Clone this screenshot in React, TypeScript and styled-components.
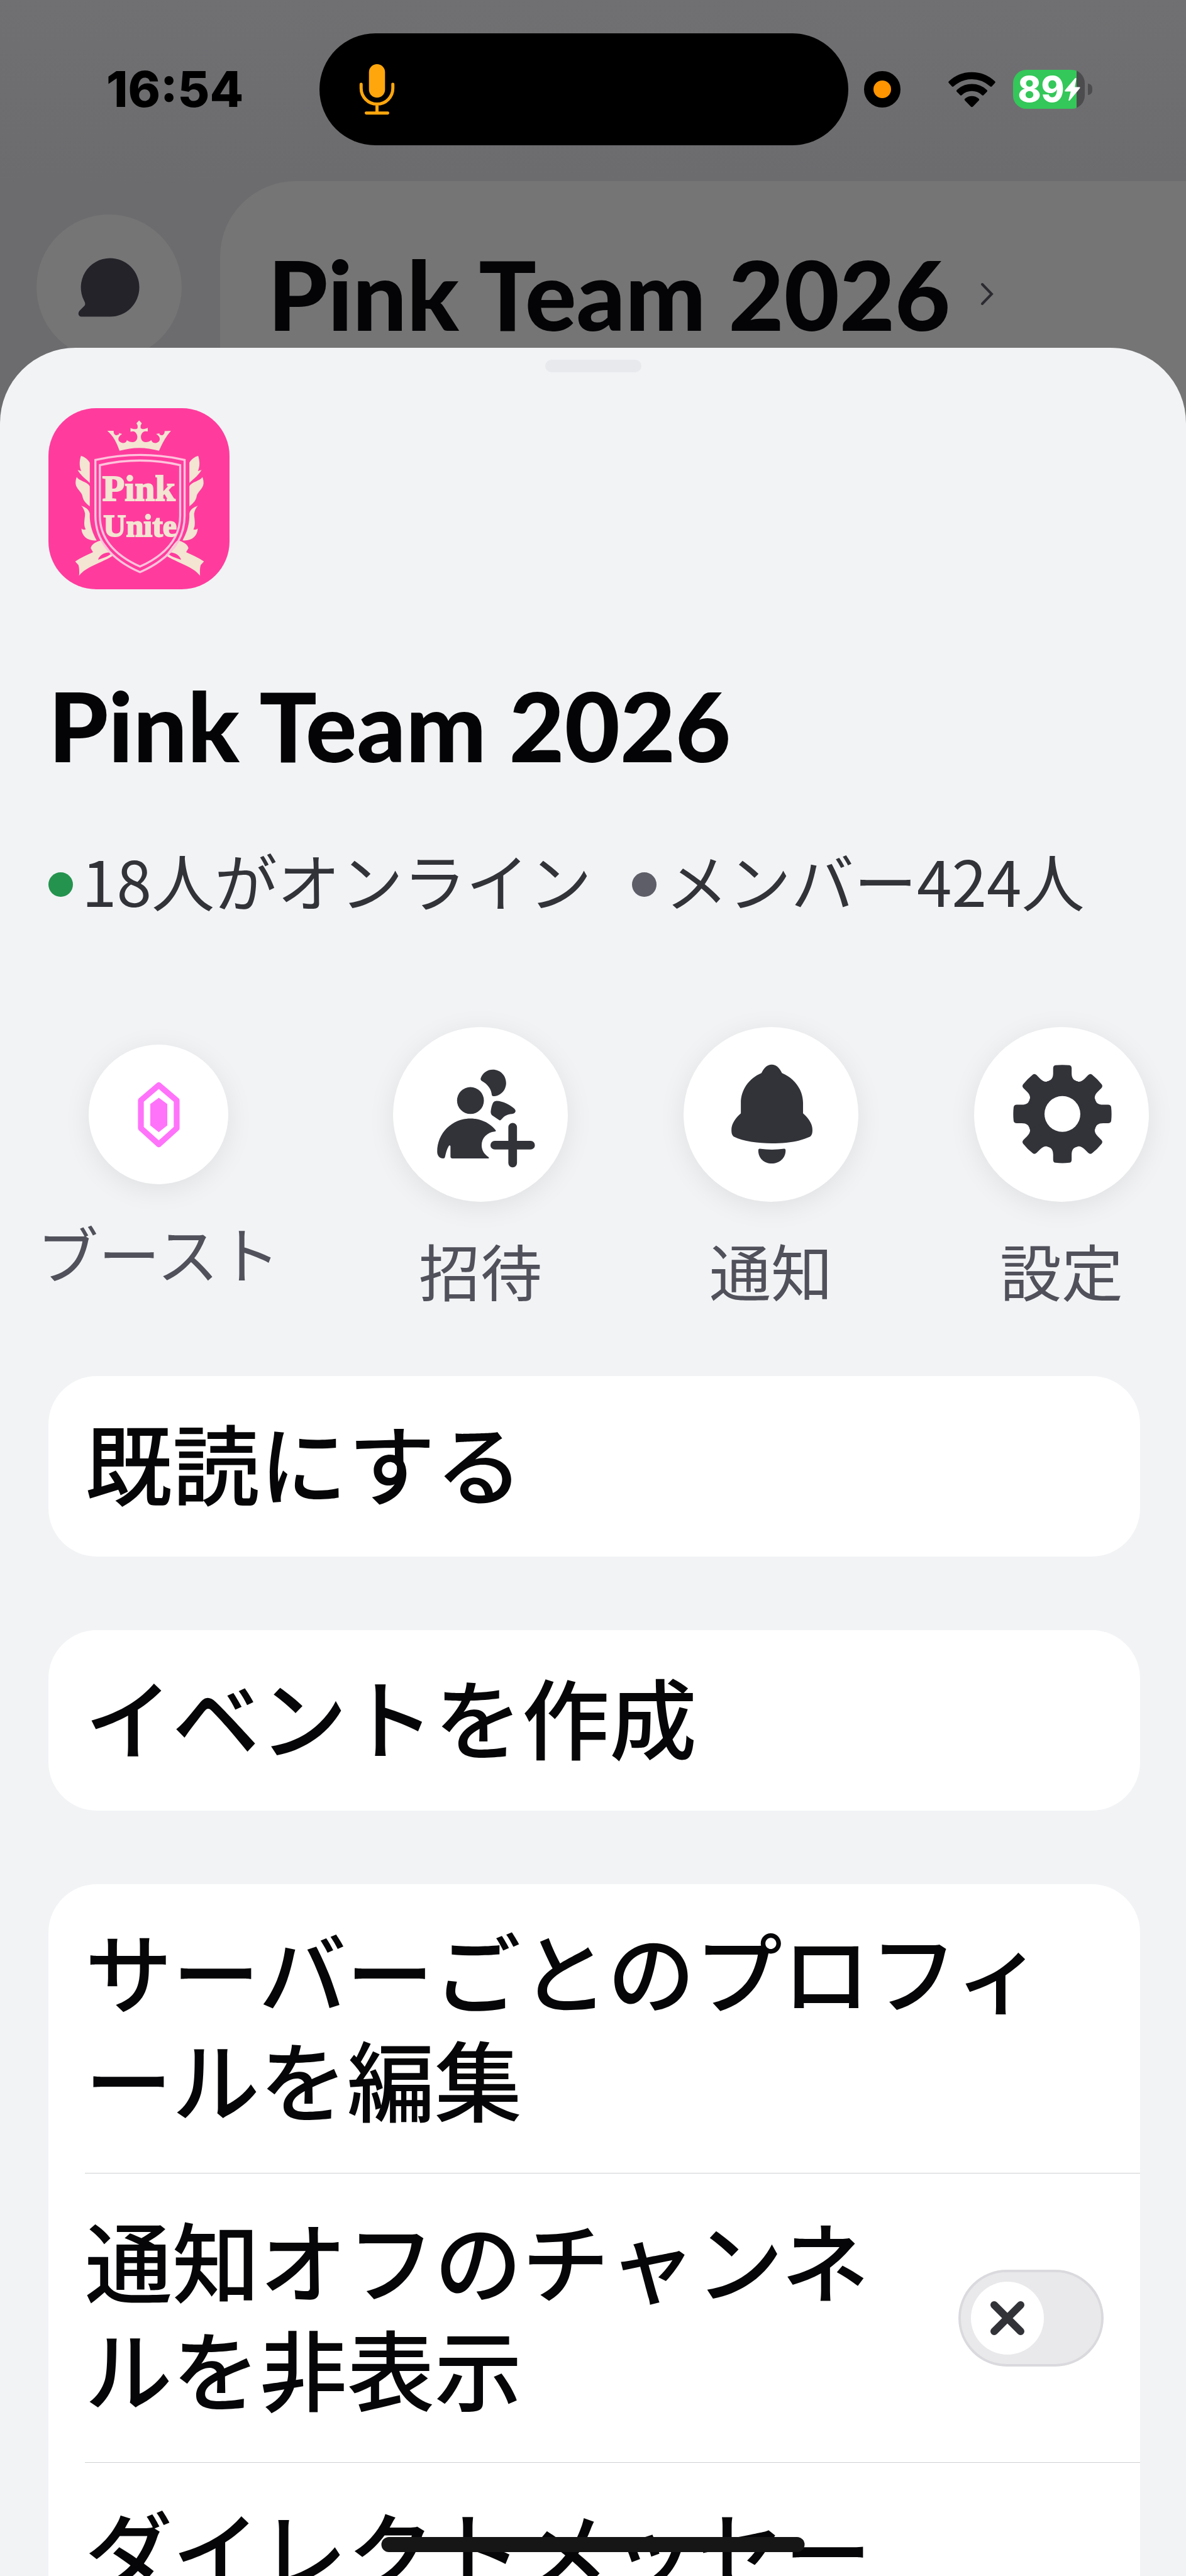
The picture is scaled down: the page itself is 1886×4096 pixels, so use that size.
import React, { useState } from "react";
import styled, { createGlobalStyle } from "styled-components";

const GlobalStyle = createGlobalStyle`
  * {
    box-sizing: border-box;
  }

  body {
    margin: 0;
    background: #f2f3f5;
    font-family: "Noto Sans CJK JP", "Noto Sans", sans-serif;
  }

  button {
    border: 0;
    padding: 0;
    background: none;
    font: inherit;
    color: inherit;
    cursor: pointer;
  }
`;

const Screen = styled.div`
  position: relative;
  display: flex;
  flex-direction: column;
  height: 100vh;
  overflow: hidden;
`;

const Backdrop = styled.header`
  display: flex;
  flex-direction: column;
  flex: none;
  height: 680px;
  background: linear-gradient(#707072, #6c6c6f 288px);
`;

const StatusBar = styled.div`
  display: grid;
  grid-template-columns: 508fr 841fr 537fr;
  align-items: center;
  height: 288px;
  padding-bottom: 4px;
`;

const Clock = styled.time`
  padding-left: 169px;
  font-family: Inter, sans-serif;
  font-size: 78px;
  font-weight: 800;
  line-height: 80px;
  color: #000;
`;

const Island = styled.div`
  display: flex;
  align-items: center;
  height: 178px;
  padding-left: 63px;
  border-radius: 89px;
  background: #000;
`;

const StatusIcons = styled.div`
  display: flex;
  align-items: center;
  padding-left: 25px;
`;

const RecordingDot = styled.span`
  width: 58px;
  height: 58px;
  margin-right: 76px;
  border: 15px solid #000;
  border-radius: 50%;
  background: #ff9500;
`;

const Battery = styled.div`
  display: flex;
  align-items: center;
  justify-content: center;
  width: 114px;
  height: 62px;
  margin: 0 5px 0 28px;
  border-radius: 21px;
  background: linear-gradient(90deg, #34c759 89%, #4c4c4e 89%);
  font-family: Inter, sans-serif;
  font-size: 56px;
  font-weight: 800;
  line-height: 62px;
  color: #fff;
`;

const BatteryCap = styled.span`
  width: 7px;
  height: 18px;
  border-radius: 0 7px 7px 0;
  background: #4c4c4e;
`;

const AppHeader = styled.div`
  display: flex;
  flex: 1;
`;

const Rail = styled.nav`
  width: 350px;
  padding: 53px 0 0 58px;
`;

const MessagesButton = styled.button`
  display: flex;
  align-items: center;
  justify-content: center;
  width: 231px;
  height: 231px;
  border-radius: 50%;
  background: #757575;
`;

const Panel = styled.div`
  flex: 1;
  padding: 93px 0 0 76px;
  border-radius: 120px 0 0 0;
  background: #757575;
`;

const PanelLink = styled.a`
  display: flex;
  align-items: center;
  gap: 48px;
  color: #000;
  text-decoration: none;
`;

const ServerName = styled.h1`
  margin: 0;
  font-family: Lato, sans-serif;
  font-size: 152px;
  font-weight: 900;
  line-height: 172px;
  color: #040406;
`;

const Sheet = styled.main`
  position: relative;
  flex: 1;
  min-height: 0;
  margin-top: -127px;
  border-radius: 120px 120px 0 0;
  background: #f2f3f5;
  overflow: hidden;
`;

const Handle = styled.div`
  width: 153px;
  height: 20px;
  margin: 19px auto 57px;
  border-radius: 10px;
  background: #e8e9ed;
`;

const Section = styled.section`
  padding: 0 73px 0 77px;
`;

const ServerBadge = styled.svg`
  display: block;
  width: 288px;
  height: 288px;
  margin-bottom: 130px;
  border-radius: 76px;
  background: #ff3c9d;
`;

const Stats = styled.div`
  display: flex;
  gap: 64px;
  margin-top: 98px;
  padding-bottom: 7px;
`;

const Stat = styled.span<{ $dot: string }>`
  display: flex;
  align-items: center;
  gap: 14px;
  font-size: 100px;
  line-height: 124px;
  color: #323339;
  white-space: nowrap;

  &::before {
    content: "";
    width: 39px;
    height: 39px;
    margin-top: 14px;
    border-radius: 50%;
    background: ${({ $dot }) => $dot};
  }
`;

const Actions = styled.div`
  display: flex;
  align-items: center;
  justify-content: space-between;
  padding: 165px 59px 103px 63px;
`;

const ActionButton = styled.button<{ $wide?: boolean }>`
  display: flex;
  flex-direction: column;
  align-items: center;
  gap: 45px;
  width: ${({ $wide }) => ($wide ? 378 : 278)}px;
  padding-bottom: 5px;
  font-size: 98px;
  line-height: 124px;
  color: #50515a;
  white-space: nowrap;
`;

const ActionIcon = styled.span<{ $size: number }>`
  display: flex;
  align-items: center;
  justify-content: center;
  width: ${({ $size }) => $size}px;
  height: ${({ $size }) => $size}px;
  border-radius: 50%;
  background: #fff;
  box-shadow: 0 8px 44px rgba(0, 0, 0, 0.08);

  svg {
    width: 185px;
    height: 185px;
    fill: #323339;
  }
`;

const Card = styled.div`
  margin-bottom: 117px;
  padding-left: 58px;
  border-radius: 77px;
  background: #fff;
`;

const rowStyles = `
  display: flex;
  align-items: center;
  justify-content: space-between;
  gap: 58px;
  width: 100%;
  padding-right: 58px;
  font-size: 139px;
  font-weight: 500;
  line-height: 172px;
  text-align: left;
  line-break: anywhere;
  color: #060608;
`;

const RowButton = styled.button`
  ${rowStyles}

  label + & {
    border-top: 1px solid #cfd0d3;
  }
`;

const RowLabel = styled.label`
  ${rowStyles}
  border-top: 1px solid #cfd0d3;
`;

const RowText = styled.span`
  padding: 49px 0 66px;
`;

const Switch = styled.span`
  position: relative;
  flex: none;
  display: flex;
  align-items: center;
  width: 231px;
  height: 154px;
  padding: 0 16px;
  border: 4px solid #dadade;
  border-radius: 77px;
  background: #e9e9eb;

  input {
    position: absolute;
    inset: 0;
    width: 100%;
    height: 100%;
    margin: 0;
    opacity: 0;
  }
`;

const Knob = styled.span<{ $on: boolean }>`
  display: flex;
  align-items: center;
  justify-content: center;
  width: 116px;
  height: 116px;
  margin-left: ${({ $on }) => ($on ? "auto" : "0")};
  border-radius: 50%;
  background: #fff;
`;

const HomeIndicator = styled.div`
  position: absolute;
  bottom: 38px;
  left: 50%;
  width: 673px;
  height: 24px;
  border-radius: 12px;
  background: #161616;
  transform: translateX(-50%);
`;

const MicIcon = () => (
  <svg width="57" height="81" viewBox="802 141 80 114" aria-hidden="true">
    <rect x="824" y="141" width="36" height="75" rx="18" fill="#ffa60d" />
    <path
      d="M806.5 186v9a35.5 35.5 0 0 0 71 0v-9M842 231v19M818 250.500h48"
      fill="none"
      stroke="#ffa60d"
      strokeWidth="7"
      strokeLinecap="round"
    />
  </svg>
);

const WifiIcon = () => (
  <svg width="75" height="57" viewBox="62 82 318 240" aria-hidden="true">
    <path d="M66 146Q130 84 221 84T376 146Q382 152 376 158L356 180Q350 186 344 180Q290 132 221 132T98 180Q92 186 86 180L66 158Q60 152 66 146Z" />
    <path d="M119 205Q162 164 221 164T323 205Q327 211 323 216L300 239Q295 244 289 239Q260 212 221 212T153 239Q147 244 142 239L119 216Q115 211 119 205Z" />
    <path d="M174 263Q194 245 221 245T268 263Q273 269 268 275L228 317Q221 323 214 317L174 275Q169 269 174 263Z" />
  </svg>
);

const BoltIcon = () => (
  <svg width="25" height="38" viewBox="848 126 108 162" fill="#fff" aria-hidden="true">
    <path d="M920 130Q929 126 928 136L918 192H950Q957 194 952 201L884 283Q875 290 875 280L890 222H854Q846 220 851 212Z" />
  </svg>
);

const BubbleIcon = () => (
  <svg width="100" height="96" viewBox="171 573 143 135" fill="#24232a" aria-hidden="true">
    <path d="M244 574A66.500 66.500 0 0 1 244 707H179C172 707 170 700 174 694L186 682Q189 678 185 671A66.500 66.500 0 0 1 244 574Z" />
  </svg>
);

const ChevronIcon = () => (
  <svg width="22" height="37" viewBox="0 0 22 37" aria-hidden="true">
    <path d="M3 3L18 18.500L3 34" fill="none" stroke="#2a2a30" strokeWidth="4" strokeLinecap="round" />
  </svg>
);

const BoostIcon = () => (
  <svg viewBox="165 101 260 260" aria-hidden="true">
    <path
      d="M295 165L335 199V261L295 297L255 261V199Z"
      fill="none"
      stroke="#ff73fa"
      strokeWidth="13"
      strokeLinejoin="round"
    />
    <path d="M295 193L314 207V255L295 270L276 255V207Z" fill="#ff73fa" />
  </svg>
);

const InviteIcon = () => (
  <svg viewBox="-19 3 780 780" aria-hidden="true">
    <circle cx="302" cy="298" r="90" />
    <path d="M372 145C386 110 416 90 452 90C502 90 541 129 541 180C541 230 502 269 455 269Q446 269 445 260C442 222 420 190 378 166Q366 158 372 145Z" />
    <path d="M478 300C520 302 562 322 596 352Q606 362 604 371Q600 386 580 388C550 389 528 402 510 424Q500 436 490 426L446 396Q437 388 438 372C440 348 446 328 454 312Q462 299 478 300Z" />
    <path d="M302 418C368 418 432 446 472 498Q474 505 464 506C414 512 377 548 377 598C377 632 396 660 424 678Q430 686 420 686H182Q168 686 168 672V604Q163 594 156 604C144 624 137 650 131 678Q129 686 120 686C94 686 79 668 79 640C79 516 178 418 302 418Z" />
    <path d="M585 477V717M465 597H705" fill="none" stroke="#323339" strokeWidth="58" strokeLinecap="round" />
  </svg>
);

const BellIcon = () => (
  <svg viewBox="268 101 260 260" aria-hidden="true">
    <path d="M399 119C409 119 416 126 422 138C450 150 469 175 469 205V228C480 238 490 250 490 265C490 272 489 276 485 280C462 291 430 295 399 295S336 291 314 280C310 276 309 272 309 265C309 250 319 238 330 228V205C330 175 348 150 376 138C382 126 389 119 399 119Z" />
    <path d="M372 307Q399 311 427 307Q430 307 430 311C430 328 416 340 399 340S369 328 369 311Q369 307 372 307Z" />
  </svg>
);

const GearIcon = () => (
  <svg viewBox="10 3 780 780" aria-hidden="true">
    <circle cx="404" cy="388" r="238" />
    {[0, 45, 90, 135, 180, 225, 270, 315].map((angle) => (
      <path
        key={angle}
        transform={`rotate(${angle} 404 388)`}
        d="M300 170C328 166 342 148 342 115V82Q342 64 358 61Q404 56 450 61Q466 64 466 82V115C466 148 480 166 508 170L404 388Z"
      />
    ))}
    <circle cx="404" cy="388" r="120" fill="#fff" />
  </svg>
);

const CrossIcon = () => (
  <svg width="56" height="56" viewBox="0 0 56 56" aria-hidden="true">
    <path d="M7 7L49 49M49 7L7 49" stroke="#323339" strokeWidth="12" strokeLinecap="round" />
  </svg>
);

// One half of the crest, the other half is the same shape mirrored
const CrestSide = () => (
  <g>
    <path d="M303 387C325 393 350 410 362 434V570C340 545 310 530 280 482L305 490C290 460 292 420 303 387Z" />
    <path d="M274 530C295 560 345 560 362 592V728C335 705 318 690 312 655C306 630 270 610 267 575Q266 550 274 530Z" />
    <path d="M305 722C335 735 355 745 362 775V800C365 860 382 910 408 956C350 962 308 930 306 876Q318 888 335 882C315 850 332 800 330 775Q325 745 305 722Z" />
    <path
      fillRule="evenodd"
      d="M440 955C470 980 490 1020 524 1056C440 1110 340 1130 290 1194Q294 1150 286 1122L264 1098C300 1072 345 1055 384 1036L368 1008C378 975 410 965 440 955ZM418 1086C440 1080 500 1060 510 1040C470 1028 425 1055 418 1086Z"
    />
  </g>
);

const Badge = () => (
  <ServerBadge viewBox="84 68 1218 1216" fill="#f3e5d2" role="img" aria-label="Pink Unite">
    <path d="M480 219H523C520 245 540 258 560 240L556 234L580 240C545 260 545 295 585 302C605 302 608 292 612 282C640 305 682 300 682 258C680 235 665 222 652 222L636 226V200C650 208 678 212 684 200V184L676 168L694 149L712 168L704 184V200C712 212 738 208 752 198V224L736 222C720 222 708 238 706 258C706 300 748 305 776 282C780 292 784 302 803 302C842 295 842 258 808 240L832 236L830 242C846 258 868 245 865 221L908 219C876 254 850 300 828 354Q694 314 562 354C545 300 520 254 480 219Z" />
    <CrestSide />
    <g transform="matrix(-1 0 0 1 1394 0)">
      <CrestSide />
    </g>
    <g fill="none" stroke="#ffc3dc" strokeWidth="14">
      <path d="M400 415Q700 348 1000 415V790C1000 970 880 1090 700 1170C520 1090 400 970 400 790Z" />
      <path d="M430 450Q700 388 970 450V790C970 950 860 1060 700 1132C540 1060 430 950 430 790Z" />
    </g>
    <g
      fontFamily="Liberation Serif, serif"
      fontWeight="700"
      textAnchor="middle"
      stroke="#f3e5d2"
      strokeWidth="8"
    >
      <text x="692" y="690" fontSize="245">Pink</text>
      <text x="700" y="930" fontSize="212">Unite</text>
    </g>
  </ServerBadge>
);

const actions = [
  { label: "ブースト", icon: <BoostIcon />, size: 222, wide: true },
  { label: "招待", icon: <InviteIcon />, size: 278 },
  { label: "通知", icon: <BellIcon />, size: 278 },
  { label: "設定", icon: <GearIcon />, size: 278 },
];

export default function App() {
  const [hideMuted, setHideMuted] = useState(false);

  return (
    <Screen lang="ja">
      <GlobalStyle />
      <Backdrop>
        <StatusBar>
          <Clock>16:54</Clock>
          <Island>
            <MicIcon />
          </Island>
          <StatusIcons>
            <RecordingDot />
            <WifiIcon />
            <Battery>
              89
              <BoltIcon />
            </Battery>
            <BatteryCap />
          </StatusIcons>
        </StatusBar>
        <AppHeader>
          <Rail>
            <MessagesButton type="button" aria-label="メッセージ">
              <BubbleIcon />
            </MessagesButton>
          </Rail>
          <Panel>
            <PanelLink href="#server">
              <ServerName as="span">Pink Team 2026</ServerName>
              <ChevronIcon />
            </PanelLink>
          </Panel>
        </AppHeader>
      </Backdrop>

      <Sheet>
        <Handle />
        <Section>
          <Badge />
          <ServerName>Pink Team 2026</ServerName>
          <Stats>
            <Stat $dot="#24934e">18人がオンライン</Stat>
            <Stat $dot="#5d5e68">メンバー424人</Stat>
          </Stats>
        </Section>

        <Actions>
          {actions.map(({ label, icon, size, wide }) => (
            <ActionButton key={label} type="button" $wide={wide}>
              <ActionIcon $size={size}>{icon}</ActionIcon>
              {label}
            </ActionButton>
          ))}
        </Actions>

        <Section>
          <Card>
            <RowButton type="button">
              <RowText>既読にする</RowText>
            </RowButton>
          </Card>
          <Card>
            <RowButton type="button">
              <RowText>イベントを作成</RowText>
            </RowButton>
          </Card>
          <Card>
            <RowButton type="button">
              <RowText>サーバーごとのプロフィールを編集</RowText>
            </RowButton>
            <RowLabel>
              <RowText>通知オフのチャンネルを非表示</RowText>
              <Switch>
                <input
                  type="checkbox"
                  role="switch"
                  checked={hideMuted}
                  onChange={(e) => setHideMuted(e.target.checked)}
                />
                <Knob $on={hideMuted}>
                  <CrossIcon />
                </Knob>
              </Switch>
            </RowLabel>
            <RowButton type="button">
              <RowText>ダイレクトメッセー</RowText>
            </RowButton>
          </Card>
        </Section>
      </Sheet>
      <HomeIndicator />
    </Screen>
  );
}
